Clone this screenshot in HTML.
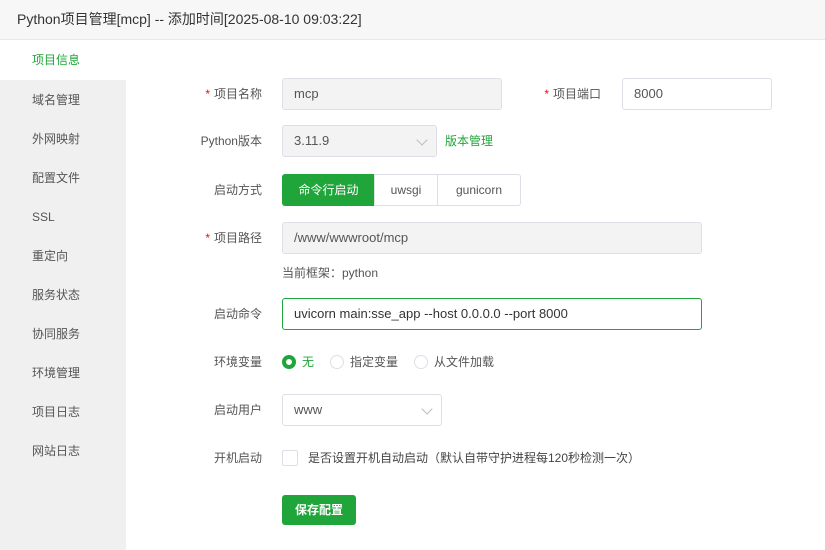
<!DOCTYPE html>
<html><head><meta charset="utf-8"><style>
*{box-sizing:border-box;margin:0;padding:0}
body{width:825px;height:550px;background:#fff;font-family:"Liberation Sans","Noto Sans CJK SC",sans-serif;color:#333;position:relative;overflow:hidden;font-size:12px}
.hd{position:absolute;left:0;top:0;width:825px;height:40px;background:#f7f7f7;border-bottom:1px solid #e8e8e8;font-size:14px;line-height:38px;padding-left:17px;color:#333}
.sb{position:absolute;left:0;top:40px;width:126px;height:510px;background:#f0f0f0}
.sb div{position:absolute;left:32px;font-size:12px;color:#555;line-height:16px}
.sb .act{left:0;width:126px;height:40px;top:0;background:#fff;color:#20a53a;padding-left:32px;line-height:40px}
.a{position:absolute}
.lbl{position:absolute;right:563px;font-size:12px;color:#555;line-height:16px;white-space:nowrap}
.lbl b{color:#ef0808;font-weight:normal;margin-right:4px}
.in{position:absolute;border:1px solid #dcdfe6;border-radius:3px;height:32px;line-height:30px;padding-left:11px;font-size:13px;color:#555}
.dis{background:#f3f3f3}
.arr{position:absolute;right:10px;top:10px;width:8px;height:8px;border-right:1px solid #bbb;border-bottom:1px solid #bbb;transform:rotate(45deg)}
.rad{position:absolute;width:14px;height:14px;border-radius:50%;border:1px solid #dcdfe6}
</style></head><body>
<div class="hd">Python项目管理[mcp] -- 添加时间[2025-08-10 09:03:22]</div>
<div class="sb">
<div class="act">项目信息</div>
<div style="top:52px">域名管理</div>
<div style="top:91px">外网映射</div>
<div style="top:130px">配置文件</div>
<div style="top:169px">SSL</div>
<div style="top:208px">重定向</div>
<div style="top:247px">服务状态</div>
<div style="top:286px">协同服务</div>
<div style="top:325px">环境管理</div>
<div style="top:364px">项目日志</div>
<div style="top:403px">网站日志</div>
</div>

<div class="lbl" style="top:86px"><b>*</b>项目名称</div>
<div class="in dis" style="left:282px;top:78px;width:220px">mcp</div>
<div class="lbl" style="top:86px;right:224px"><b>*</b>项目端口</div>
<div class="in" style="left:622px;top:78px;width:150px">8000</div>

<div class="lbl" style="top:133px">Python版本</div>
<div class="in dis" style="left:282px;top:125px;width:155px">3.11.9<span class="arr"></span></div>
<div class="a" style="left:445px;top:133px;color:#20a53a;font-size:12px;line-height:16px">版本管理</div>

<div class="lbl" style="top:182px">启动方式</div>
<div class="a" style="left:282px;top:174px;width:93px;height:32px;background:#20a53a;color:#fff;border-radius:3px 0 0 3px;text-align:center;line-height:32px;font-size:12px">命令行启动</div>
<div class="a" style="left:374px;top:174px;width:64px;height:32px;border:1px solid #dcdfe6;text-align:center;line-height:30px;font-size:12px;color:#555">uwsgi</div>
<div class="a" style="left:437px;top:174px;width:84px;height:32px;border:1px solid #dcdfe6;border-radius:0 3px 3px 0;text-align:center;line-height:30px;font-size:12px;color:#555">gunicorn</div>

<div class="lbl" style="top:230px"><b>*</b>项目路径</div>
<div class="in dis" style="left:282px;top:222px;width:420px">/www/wwwroot/mcp</div>
<div class="a" style="left:282px;top:265px;font-size:12px;color:#555;line-height:16px">当前框架：python</div>

<div class="lbl" style="top:306px">启动命令</div>
<div class="in" style="left:282px;top:298px;width:420px;border-color:#20a53a;color:#333">uvicorn main:sse_app --host 0.0.0.0 --port 8000</div>

<div class="lbl" style="top:354px">环境变量</div>
<div class="rad" style="left:282px;top:355px;border:4px solid #20a53a;background:#fff"></div>
<div class="a" style="left:302px;top:354px;color:#20a53a;line-height:16px">无</div>
<div class="rad" style="left:330px;top:355px"></div>
<div class="a" style="left:350px;top:354px;color:#555;line-height:16px">指定变量</div>
<div class="rad" style="left:414px;top:355px"></div>
<div class="a" style="left:434px;top:354px;color:#555;line-height:16px">从文件加载</div>

<div class="lbl" style="top:402px">启动用户</div>
<div class="in" style="left:282px;top:394px;width:160px">www<span class="arr"></span></div>

<div class="lbl" style="top:450px">开机启动</div>
<div class="a" style="left:282px;top:450px;width:16px;height:16px;border:1px solid #dcdfe6;border-radius:2px"></div>
<div class="a" style="left:308px;top:450px;color:#444;line-height:16px">是否设置开机自动启动（默认自带守护进程每120秒检测一次）</div>

<div class="a" style="left:282px;top:495px;width:74px;height:30px;background:#20a53a;color:#fff;border-radius:3px;text-align:center;line-height:30px;font-size:12px;font-weight:bold">保存配置</div>
</body></html>
